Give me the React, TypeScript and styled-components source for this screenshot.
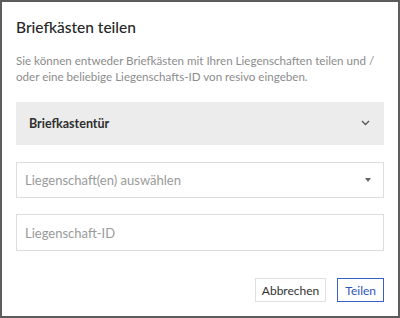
import styled, { createGlobalStyle } from "styled-components";

const GlobalStyle = createGlobalStyle`
  html, body {
    margin: 0;
    padding: 0;
    background: #ffffff;
  }
  * {
    box-sizing: border-box;
  }
`;

const Dialog = styled.div`
  width: 400px;
  height: 318px;
  border: 2px solid #5c5c5c;
  background: #ffffff;
  padding: 14px 14px 14px 14px;
  display: flex;
  flex-direction: column;
  font-family: Lato, "Noto Sans", sans-serif;
`;

const Title = styled.h2`
  margin: 1px 0 0 0;
  font-size: 15.5px;
  line-height: 20px;
  font-weight: 500;
  color: #262626;
`;

const Description = styled.p`
  margin: 16px 0 0 0;
  font-size: 11.6px;
  line-height: 16px;
  white-space: nowrap;
  color: #8c8c8c;
`;

const Accordion = styled.div`
  margin-top: 17px;
  height: 43px;
  background: #ececec;
  display: flex;
  align-items: center;
  justify-content: space-between;
  padding: 0 14px 0 13px;
  font-size: 12.5px;
  font-weight: 700;
  color: #2e2e2e;
`;

const Field = styled.div<{ $top: number }>`
  margin-top: ${(p) => p.$top}px;
  height: 37px;
  border: 1px solid #dcdcdc;
  display: flex;
  align-items: center;
  justify-content: space-between;
  padding: 0 12px 0 8px;
  font-size: 13px;
  color: #9a9a9a;
`;

const Caret = styled.span`
  width: 0;
  height: 0;
  border-left: 3.5px solid transparent;
  border-right: 3.5px solid transparent;
  border-top: 4px solid #666;
`;

const Footer = styled.div`
  margin-top: 27px;
  display: flex;
  justify-content: flex-end;
  gap: 11px;
`;

const Button = styled.button<{ $primary?: boolean }>`
  height: 24px;
  padding: 0 ${(p) => (p.$primary ? 7 : 6)}px;
  font-family: inherit;
  font-size: 12px;
  background: #fff;
  cursor: pointer;
  border: 1px solid ${(p) => (p.$primary ? "#3a5fc4" : "#e0e0e0")};
  color: ${(p) => (p.$primary ? "#2f54b8" : "#333")};
`;

const App = () => {
  return (
    <>
      <GlobalStyle />
      <Dialog>
        <Title>Briefkästen teilen</Title>
        <Description>
          Sie können entweder Briefkästen mit Ihren Liegenschaften teilen und /
          <br />
          oder eine beliebige Liegenschafts-ID von resivo eingeben.
        </Description>
        <Accordion>
          Briefkastentür
          <svg width="9" height="6" viewBox="0 0 9 6" fill="none">
            <path d="M1 1l3.5 3.5L8 1" stroke="#555" strokeWidth="1.3" />
          </svg>
        </Accordion>
        <Field $top={17}>
          Liegenschaft(en) auswählen
          <Caret />
        </Field>
        <Field $top={16}>Liegenschaft-ID</Field>
        <Footer>
          <Button>Abbrechen</Button>
          <Button $primary>Teilen</Button>
        </Footer>
      </Dialog>
    </>
  );
};

export default App;
